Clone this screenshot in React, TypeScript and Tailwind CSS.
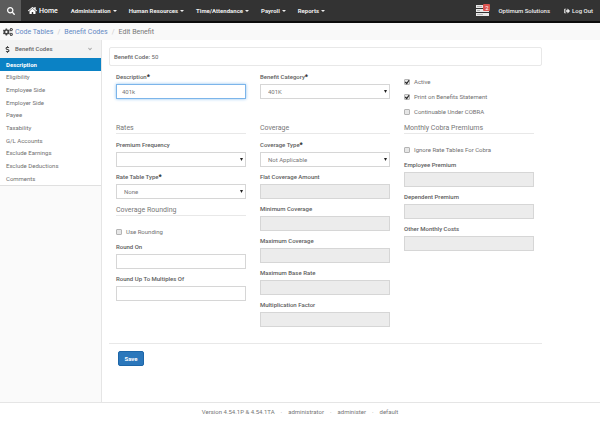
import type { ReactNode } from "react";
import { FaAngleDown, FaCogs, FaDollarSign, FaHome, FaSearch, FaSignOutAlt } from "react-icons/fa";

const menus = ["Administration", "Human Resources", "Time/Attendance", "Payroll", "Reports"];

const sections = [
  "Eligibility",
  "Employee Side",
  "Employer Side",
  "Payee",
  "Taxability",
  "G/L Accounts",
  "Exclude Earnings",
  "Exclude Deductions",
  "Comments",
];

function Label({ id, text, required }: { id: string; text: string; required?: boolean }) {
  return (
    <label htmlFor={id} className="block h-[10px] font-medium leading-[10px] text-[#5c5c5c] whitespace-nowrap">
      {text}
      {required && <span className="text-[7px] font-bold text-[#222]">*</span>}
    </label>
  );
}

function Field(props: { id: string; label: string; value?: string; required?: boolean; disabled?: boolean; focused?: boolean }) {
  const look = props.disabled
    ? "border-[#d6d6d6] bg-[#ececec]"
    : props.focused
      ? "border-[#7cb5ea] bg-white shadow-[0_0_3px_#8fc3f0]"
      : "border-[#d6d6d6] bg-white";

  return (
    <div className="mb-[5px] flex flex-col gap-0.5">
      <Label id={props.id} text={props.label} required={props.required} />
      <input
        id={props.id}
        type="text"
        defaultValue={props.value}
        disabled={props.disabled}
        autoFocus={props.focused}
        className={`h-[15px] w-full border px-[5px] text-[#777] outline-none ${look}`}
      />
    </div>
  );
}

function SelectField(props: { id: string; label: string; value: string; required?: boolean }) {
  return (
    <div className="mb-[5px] flex flex-col gap-0.5">
      <Label id={props.id} text={props.label} required={props.required} />
      <div className="relative">
        <select
          id={props.id}
          className="block h-[15px] w-full appearance-none border border-[#d6d6d6] bg-white px-[7px] text-[#777] outline-none"
        >
          <option>{props.value}</option>
        </select>
        <svg viewBox="0 0 6 6" className="pointer-events-none absolute top-[6px] right-[3px] size-[3px]">
          <path d="M0 0h6L3 6z" fill="#222" />
        </svg>
      </div>
    </div>
  );
}

function Check({ id, label, checked }: { id: string; label: string; checked?: boolean }) {
  return (
    <div className="mb-[5px] flex h-[10px] items-center gap-1">
      <span className="relative size-[6px]">
        <input
          id={id}
          type="checkbox"
          defaultChecked={checked}
          className="peer block size-[6px] appearance-none rounded-[1px] border border-[#b4b4b4] bg-[#e6e6e6]"
        />
        <svg
          viewBox="0 0 12 12"
          className="pointer-events-none absolute inset-0 hidden size-[6px] peer-checked:block"
        >
          <path d="M2.5 6l3 3L10 2.500" fill="none" stroke="#222" strokeWidth="2.400" />
        </svg>
      </span>
      <label htmlFor={id} className="leading-[10px] text-[#707070] whitespace-nowrap">
        {label}
      </label>
    </div>
  );
}

function Heading({ children }: { children: ReactNode }) {
  return (
    <h2 className="mb-[6px] h-3 border-b border-[#e8e8e8] text-[7px] leading-[12px] text-[#777] whitespace-nowrap">
      {children}
    </h2>
  );
}

export default function App() {
  return (
    <div className="flex min-h-screen flex-col bg-white font-[Roboto,sans-serif] text-[6px] leading-[10px] text-[#666]">

      {/* TOP BAR */}
      <header className="flex h-[23px] items-stretch border-b-2 border-[#0b0b0b] bg-[#333] font-bold text-[#eee]">
        <button type="button" aria-label="Search" className="flex w-[21px] items-center justify-center bg-[#5c5c5c]">
          <FaSearch className="size-2 text-white" />
        </button>
        <a href="#" className="ml-[7px] flex items-center gap-0.5 text-[7px] font-medium text-white">
          <FaHome className="size-[9px]" />
          Home
        </a>
        <nav className="ml-[13px] flex items-stretch gap-[12px] whitespace-nowrap">
          {menus.map((menu) => (
            <button key={menu} type="button" className="flex items-center gap-[2px]">
              {menu}
              <svg viewBox="0 0 8 4" className="h-[2px] w-1">
                <path d="M0 0h8L4 4z" fill="#eee" />
              </svg>
            </button>
          ))}
        </nav>
        <div className="mr-[7px] ml-auto flex items-center font-medium whitespace-nowrap">
          <a href="#" aria-label="2 messages" className="relative mr-[9px]">
            <svg viewBox="0 0 13 11" className="h-[11px] w-[13px]">
              <path d="M0 0h13v3H0zM0 4h13v3H0zM0 8h13v3H0z" fill="#e8e8e8" />
              <path d="M1 1.500h5M1 5.500h3M1 9.500h6" stroke="#999" strokeWidth="0.700" />
            </svg>
            <span className="absolute -top-px -right-px h-[7px] w-[7px] rounded-[1px] bg-[#d9534f] text-center leading-[7px] font-normal text-white">
              2
            </span>
          </a>
          <a href="#" className="mr-[14px]">Optimum Solutions</a>
          <a href="#" className="flex items-center gap-[2px]">
            <FaSignOutAlt className="size-[6px]" />
            Log Out
          </a>
        </div>
      </header>

      {/* BREADCRUMB */}
      <div className="flex h-[17px] items-center bg-[#f9f9f9] pl-[3px] text-[7px]">
        <FaCogs className="mr-0.5 size-[10px] text-[#444]" />
        <a href="#" className="text-[#6589c4]">Code Tables</a>
        <span className="mx-1 text-[#ccc]">/</span>
        <a href="#" className="text-[#6589c4]">Benefit Codes</a>
        <span className="mx-1 text-[#ccc]">/</span>
        <span className="text-[#777]">Edit Benefit</span>
      </div>

      <div className="flex grow">

        {/* SIDEBAR */}
        <aside className="w-[102px] shrink-0 border-r border-[#e5e5e5] bg-[#fafafa]">
          <button type="button" className="flex h-[18px] w-full items-center bg-[#f3f3f3] pr-2 pl-1 font-medium text-[#666]">
            <FaDollarSign className="mr-[4px] size-[7px] text-[#444]" />
            Benefit Codes
            <FaAngleDown className="ml-auto size-[6px] text-[#aaa]" />
          </button>
          <a href="#" className="block h-[13px] bg-[#0b82c5] pl-[6px] leading-[13px] font-bold text-white">
            Description
          </a>
          <nav className="flex h-[115px] flex-col border-b border-[#e0e0e0] bg-white">
            {sections.map((section) => (
              <a key={section} href="#" className="flex grow items-center pl-[6px] text-[#707070]">
                {section}
              </a>
            ))}
          </nav>
        </aside>

        {/* BENEFIT FORM */}
        <main className="grow">
          <div className="mt-[7px] mr-[58px] ml-[7px] h-[19px] rounded-[2px] border border-[#e8e8e8] pl-1 leading-[17px] text-[#666]">
            <span className="font-medium">Benefit Code:</span> 50
          </div>

          <form>
            <div className="mt-[6px] mr-[66px] ml-[14px] grid grid-cols-3 gap-[14px]">
              <div>
                <Field id="description" label="Description" value="401k" required focused />
                <div className="mt-[23px]">
                  <Heading>Rates</Heading>
                </div>
                <SelectField id="frequency" label="Premium Frequency" value="" />
                <SelectField id="rate-table" label="Rate Table Type" value="None" required />
                <Heading>Coverage Rounding</Heading>
                <div className="pt-[5px]">
                  <Check id="use-rounding" label="Use Rounding" />
                </div>
                <Field id="round-on" label="Round On" />
                <Field id="round-up" label="Round Up To Multiples Of" />
              </div>

              <div>
                <SelectField id="category" label="Benefit Category" value="401K" required />
                <div className="mt-[23px]">
                  <Heading>Coverage</Heading>
                </div>
                <SelectField id="coverage-type" label="Coverage Type" value="Not Applicable" required />
                <Field id="flat" label="Flat Coverage Amount" disabled />
                <Field id="minimum" label="Minimum Coverage" disabled />
                <Field id="maximum" label="Maximum Coverage" disabled />
                <Field id="base-rate" label="Maximum Base Rate" disabled />
                <Field id="factor" label="Multiplication Factor" disabled />
              </div>

              <div className="pt-[5px]">
                <Check id="active" label="Active" checked />
                <Check id="print" label="Print on Benefits Statement" checked />
                <Check id="cobra" label="Continuable Under COBRA" />
                <Heading>Monthly Cobra Premiums</Heading>
                <div className="pt-[5px]">
                  <Check id="ignore" label="Ignore Rate Tables For Cobra" />
                </div>
                <Field id="employee" label="Employee Premium" disabled />
                <Field id="dependent" label="Dependent Premium" disabled />
                <Field id="other" label="Other Monthly Costs" disabled />
              </div>
            </div>

            <div className="mt-[11px] mr-[58px] ml-[7px] border-t border-[#e8e8e8] pt-[7px] pl-[9px]">
              <button type="submit" className="h-[15px] w-[26px] rounded-[2px] border border-[#1d66a8] bg-[#2b77bb] leading-[13px] font-bold text-white">
                Save
              </button>
            </div>
          </form>
        </main>
      </div>

      {/* FOOTER */}
      <footer className="flex h-[28px] items-start justify-center gap-[6px] border-t border-[#e5e5e5] pt-1 text-[#777]">
        <span>Version 4.54.1P &amp; 4.54.1TA</span>
        <span className="text-[#888]">·</span>
        <span>administrator</span>
        <span className="text-[#888]">·</span>
        <span>administer</span>
        <span className="text-[#888]">·</span>
        <span>default</span>
      </footer>

    </div>
  );
}
